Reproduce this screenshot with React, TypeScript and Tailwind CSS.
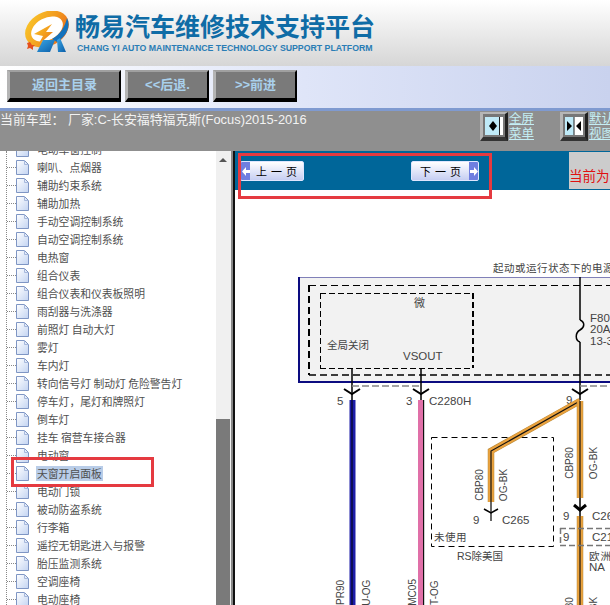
const cjk = "font-['Liberation_Sans','Noto_Sans_CJK_SC',sans-serif]";

const treeItems = [
  '电动车窗控制',
  '喇叭、点烟器',
  '辅助约束系统',
  '辅助加热',
  '手动空调控制系统',
  '自动空调控制系统',
  '电热窗',
  '组合仪表',
  '组合仪表和仪表板照明',
  '雨刮器与洗涤器',
  '前照灯 自动大灯',
  '雾灯',
  '车内灯',
  '转向信号灯 制动灯 危险警告灯',
  '停车灯，尾灯和牌照灯',
  '倒车灯',
  '挂车 宿营车接合器',
  '电动窗',
  '天窗开启面板',
  '电动门锁',
  '被动防盗系统',
  '行李箱',
  '遥控无钥匙进入与报警',
  '胎压监测系统',
  '空调座椅',
  '电动座椅',
];

const Logo = () => (
  <svg width="50" height="44" viewBox="0 0 50 44" className="shrink-0">
    <defs>
      <linearGradient id="ring" x1="0" y1="0" x2="1" y2="1">
        <stop offset="0" stopColor="#f9c62a" />
        <stop offset="0.55" stopColor="#f29a1e" />
        <stop offset="1" stopColor="#e8641c" />
      </linearGradient>
      <linearGradient id="blueR" x1="0" y1="0" x2="1" y2="1">
        <stop offset="0" stopColor="#3aa6e6" />
        <stop offset="1" stopColor="#0b5ea8" />
      </linearGradient>
    </defs>
    <ellipse cx="23" cy="18" rx="20" ry="14" transform="rotate(-28 23 18)" fill="#ffffff" stroke="url(#ring)" strokeWidth="6" />
    <path d="M43 7C47 15 43 25 33 31L28 28C37 23 41 15 43 7Z" fill="#1472bc" />
    <path d="M10 23L28 13L22 21L29 21L14 34L19 25Z" fill="url(#ring)" />
    <path d="M6 31L8 34L11 34L9 36L9 39L6 37L3 38L4 35L3 32Z" fill="#e4501c" />
    <path d="M19 29H31L26 41H13Z" fill="url(#blueR)" />
    <path d="M33 29L36 27L42 41H34Z" fill="url(#blueR)" />
  </svg>
);

const Header = () => (
  <div className="flex h-[66px] items-start bg-gradient-to-b from-white to-[#d6d6d6] pl-[24px] pt-[11px]">
    <Logo />
    <div className="ml-[1px] flex flex-col">
      <div className="text-[25px] font-bold leading-[28px] whitespace-nowrap text-[#0f6ca6] font-['Noto_Sans_CJK_SC',sans-serif]">
        畅易汽车维修技术支持平台
      </div>
      <div className="ml-[2px] mt-[3px] text-[8.75px] font-bold leading-[12px] whitespace-nowrap text-[#2a7db5] font-['Liberation_Sans',sans-serif]">
        CHANG YI AUTO MAINTENANCE TECHNOLOGY SUPPORT PLATFORM
      </div>
    </div>
  </div>
);

const NavButton = ({ label, width }: { label: string; width: string }) => (
  <button
    className={`${width} flex h-[32px] items-center justify-center border-t-[2px] border-l-[3px] border-r-[2px] border-b-[4px] border-t-[#a0a0a0] border-l-[#b4b4b4] border-r-black border-b-black bg-[#7a7a7a] text-[13px] font-bold text-[#a9d0ec] ${cjk}`}
  >
    {label}
  </button>
);

const Toolbar = () => (
  <div className="flex h-[45px] items-start gap-[4px] border-b-[3px] border-[#7f9ad0] bg-gradient-to-r from-white via-[#dfe5f8] to-[#c9d2ee] pl-[7px] pt-[4px]">
    <NavButton label="返回主目录" width="w-[114px]" />
    <NavButton label="<<后退." width="w-[84px]" />
    <NavButton label=">>前进" width="w-[84px]" />
  </div>
);

const ViewIcon = ({ full }: { full?: boolean }) => (
  <div className="flex h-[29px] w-[28px] shrink-0 items-center justify-center border-t-[2px] border-l-[3px] border-r-[3px] border-b-[4px] border-t-[#b5b5b5] border-l-[#b5b5b5] border-r-[#222222] border-b-[#333333] bg-[#777777]">
    <svg width="18" height="18" viewBox="0 0 18 18">
      <rect width="18" height="18" fill="#bfeaf8" />
      {full ? (
        <>
          <rect x="14" width="4" height="18" fill="#ffffff" />
          <rect x="14" width="1" height="18" fill="#222222" />
          <path d="M8 4L12 9L8 14L4 9Z" fill="#000" />
        </>
      ) : (
        <>
          <rect x="9" width="9" height="18" fill="#ffffff" />
          <rect x="8.5" width="1" height="18" fill="#222222" />
          <path d="M2 4L7 9L2 14ZM16 4L11 9L16 14Z" fill="#000" />
        </>
      )}
    </svg>
  </div>
);

const ViewLink = ({ text, full }: { text: string[]; full?: boolean }) => (
  <div className="flex items-start">
    <ViewIcon full={full} />
    <div className={`ml-[1px] text-[12.5px] leading-[15px] whitespace-nowrap text-[#c4eef4] underline ${cjk}`}>
      {text.map((t) => (
        <div key={t}>{t}</div>
      ))}
    </div>
  </div>
);

const CarBar = () => (
  <div className="flex h-[40px] bg-[#8f8f8f]">
    <div className={`w-[480px] shrink-0 text-[12.9px] leading-[17px] whitespace-nowrap text-[#f2f2f2] ${cjk}`}>
      当前车型： 厂家:C-长安福特福克斯(Focus)2015-2016
    </div>
    <div className="flex items-start gap-[26px] pt-[1px]">
      <ViewLink text={['全屏', '菜单']} full />
      <ViewLink text={['默认', '视图']} />
    </div>
  </div>
);

const DocIcon = () => (
  <svg width="13" height="15" viewBox="0 0 13 15" className="shrink-0">
    <defs>
      <linearGradient id="doc" x1="0" y1="0" x2="1" y2="1">
        <stop offset="0" stopColor="#ffffff" />
        <stop offset="1" stopColor="#c3d4f2" />
      </linearGradient>
    </defs>
    <path d="M0.5 0.5H8.5L12.5 4.5V14.5H0.5Z" fill="url(#doc)" stroke="#7f96c4" />
    <path d="M8.5 0.5V4.5H12.5" fill="none" stroke="#a6b8dc" />
  </svg>
);

const Sidebar = () => (
  <div className="flex w-[231px] shrink-0 overflow-hidden bg-white">
    <div className="relative h-[454px] w-[216px] overflow-hidden">
      <div className="absolute bottom-0 left-[6px] top-0 border-l border-dotted border-[#888888]" />
      <ul className="mt-[-11px]">
        {treeItems.map((item) => (
          <li key={item} className="flex h-[18px] items-center pl-[7px]">
            <span className="w-[9px] shrink-0 border-t border-dotted border-[#888888]" />
            <DocIcon />
            <span
              className={`ml-[7px] px-[1px] text-[10.8px] leading-[15px] whitespace-nowrap text-[#505050] font-['Noto_Sans_CJK_SC',sans-serif] ${
                item === '天窗开启面板' ? 'bg-[#b9cde8]' : ''
              }`}
            >
              {item}
            </span>
          </li>
        ))}
      </ul>
    </div>
    <div className="flex h-[454px] w-[15px] flex-col bg-[#f0f0f0]">
      <div className="h-[268px] pl-[3px] pt-[7px]">
        <div className="h-0 w-0 border-x-[4px] border-b-[4px] border-x-transparent border-b-[#555555]" />
      </div>
      <div className="mr-[1px] flex-1 bg-[#7a7a7a]" />
    </div>
  </div>
);

const PageButton = ({ label, dir }: { label: string; dir: 'prev' | 'next' }) => {
  const arrow = (
    <div className="flex w-[9px] items-center justify-center self-stretch bg-[#6f7fe0]">
      <svg width="8" height="9" viewBox="0 0 8 9">
        <path d={dir === 'next' ? 'M0 3H4V0L8 4.5 4 9V6H0Z' : 'M8 3H4V0L0 4.5 4 9V6H8Z'} fill="#fff" />
      </svg>
    </div>
  );
  return (
    <div className={`flex h-[20px] items-center overflow-hidden rounded-[2px] border border-[#dfe6ff] bg-gradient-to-b from-white to-[#c6cef2] ${dir === 'next' ? 'w-[68px]' : 'w-[65px]'}`}>
      {dir === 'prev' && arrow}
      <span className="flex-1 pl-[4px] text-center text-[11px] tracking-[4px] text-black font-['Noto_Sans_CJK_SC',sans-serif]">{label}</span>
      {dir === 'next' && arrow}
    </div>
  );
};

const PageBar = () => (
  <div className="flex h-[39px] items-start bg-[#006699] pl-[5px] pt-[10px]">
    <PageButton label="上一页" dir="prev" />
    <div className="ml-[107px]">
      <PageButton label="下一页" dir="next" />
    </div>
    <div className={`ml-[90px] mt-[-9px] h-[37px] w-[41px] shrink-0 overflow-hidden bg-[#cccccc] pt-[16px] text-[13.5px] leading-[18px] whitespace-nowrap text-[#e01010] ${cjk}`}>
      当前为
    </div>
  </div>
);

const Arrow = ({ x, y }: { x: number; y: number }) => (
  <path d={`M${x - 8} ${y - 5}L${x} ${y}L${x + 8} ${y - 5}`} fill="none" stroke="#000" strokeWidth="2" />
);

const label = { fontFamily: "'Liberation Sans','Noto Sans CJK SC',sans-serif", fill: '#444' };

const Rotated = ({ x, y, children }: { x: number; y: number; children: string }) => (
  <text x={x} y={y} transform={`rotate(-90 ${x} ${y})`} textAnchor="middle" fontSize="10" {...label}>
    {children}
  </text>
);

const OrangeWire = ({ d }: { d: string }) => (
  <>
    <path d={d} fill="none" stroke="#b98a3a" strokeWidth="6.5" />
    <path d={d} fill="none" stroke="#eaa23e" strokeWidth="5.5" />
    <path d={d} fill="none" stroke="#111" strokeWidth="1.2" />
  </>
);

const Diagram = () => (
  <svg width="375" height="415" viewBox="235 190 375 415" className="block">
    <text x="493" y="272" fontSize="10.5" letterSpacing="0.5" {...label}>起动或运行状态下的电源</text>

    <rect x="298" y="277" width="320" height="105" fill="#f2f2f2" />
    <path d="M298.5 277.5H610" stroke="#8080b8" fill="none" />
    <path d="M299 277V383M298 382H610" stroke="#0c0c80" strokeWidth="2" fill="none" />

    <path d="M309 285.5H610" stroke="#000" strokeDasharray="7 4" fill="none" strokeWidth="1" />
    <path d="M309 375H610" stroke="#000" strokeDasharray="7 4" fill="none" strokeWidth="1.5" />
    <path d="M309 285V375" stroke="#000" strokeDasharray="7 4" strokeWidth="2" fill="none" />
    <path d="M320 293.5H473M320 368.5H473" stroke="#000" strokeDasharray="6 3" fill="none" />
    <path d="M320.5 293V368" stroke="#000" strokeDasharray="6 3" fill="none" />
    <path d="M473 293V368" stroke="#000" strokeDasharray="6 3" strokeWidth="2" fill="none" />

    <text x="414" y="307" fontSize="11" {...label}>微</text>
    <text x="327" y="349" fontSize="10.5" {...label}>全局关闭</text>
    <text x="403" y="360" fontSize="11.5" {...label}>VSOUT</text>

    <path d="M580 277V320M580 342V400" stroke="#000" strokeWidth="1.5" fill="none" />
    <path d="M580 320C585 322 585 327 580 330C575 333 575 340 580 342" stroke="#000" strokeWidth="1.5" fill="none" />
    <text x="590" y="322" fontSize="11.5" {...label}>F80</text>
    <text x="590" y="333" fontSize="11.5" {...label}>20A</text>
    <text x="590" y="345" fontSize="11.5" {...label}>13-3</text>

    <path d="M352 368V400M421 368V400" stroke="#000" strokeWidth="1.5" fill="none" />
    <path d="M352 386H421M580 386H610" stroke="#888" strokeDasharray="7 3" strokeWidth="1.5" fill="none" />
    <Arrow x={352} y={394} />
    <Arrow x={421} y={394} />
    <Arrow x={580} y={394} />

    <text x="337" y="405" fontSize="11.5" {...label}>5</text>
    <text x="406" y="405" fontSize="11.5" {...label}>3</text>
    <text x="429" y="405" fontSize="11.5" {...label}>C2280H</text>
    <text x="566" y="404" fontSize="11.5" {...label}>9</text>

    <rect x="349.5" y="400" width="6" height="205" fill="#1c1ca8" />
    <rect x="351.5" y="400" width="1" height="205" fill="#000" />
    <rect x="418" y="400" width="6" height="205" fill="#e070a8" />
    <rect x="423" y="400" width="1.2" height="205" fill="#111" />

    <rect x="431.5" y="437.5" width="122" height="109" fill="none" stroke="#000" strokeDasharray="6 4" />
    <OrangeWire d="M580 401L491 451V502" />
    <OrangeWire d="M580 401V498" />
    <path d="M491 502V521" stroke="#000" strokeWidth="1.2" />
    <path d="M484 509L491 513L498 509" fill="none" stroke="#000" strokeWidth="1.5" />
    <path d="M580 498V516" stroke="#000" strokeWidth="1.5" />
    <path d="M574 505L580 510L586 505" fill="none" stroke="#000" strokeWidth="3" />
    <OrangeWire d="M580 516V605" />

    <Rotated x={483} y={485}>CBP80</Rotated>
    <Rotated x={507} y={485}>OG-BK</Rotated>
    <Rotated x={573} y={463}>CBP80</Rotated>
    <Rotated x={597} y={463}>OG-BK</Rotated>

    <text x="473" y="524" fontSize="11.5" {...label}>9</text>
    <text x="502" y="524" fontSize="11.5" {...label}>C265</text>
    <text x="434" y="541" fontSize="10.5" letterSpacing="0.5" {...label}>未使用</text>
    <text x="457" y="560" fontSize="10.5" {...label}>RS除美国</text>

    <text x="563" y="520" fontSize="11.5" {...label}>9</text>
    <text x="592" y="520" fontSize="11.5" {...label}>C26</text>
    <path d="M560 528.5H610M560 545.5H610M560.5 528V546" stroke="#777" strokeDasharray="6 3" strokeWidth="1.5" fill="none" />
    <text x="563" y="541" fontSize="11.5" {...label}>9</text>
    <text x="592" y="541" fontSize="11.5" {...label}>C21</text>
    <text x="589" y="560" fontSize="10.5" letterSpacing="1" {...label}>欧洲</text>
    <text x="589" y="571" fontSize="11.5" {...label}>NA</text>

    <Rotated x={344} y={596}>CPR90</Rotated>
    <Rotated x={370} y={596}>BU-OG</Rotated>
    <Rotated x={416} y={596}>CMC05</Rotated>
    <Rotated x={438} y={596}>VT-OG</Rotated>
    <Rotated x={573} y={613}>CBP80</Rotated>
    <Rotated x={597} y={613}>OG-BK</Rotated>
  </svg>
);

export default function App() {
  return (
    <div className="relative h-[605px] w-[610px] overflow-hidden bg-white">
      <Header />
      <Toolbar />
      <CarBar />
      <div className="flex">
        <Sidebar />
        <div className="flex h-[454px] w-[4px] shrink-0">
          <div className="w-[2px] bg-[#888888]" />
          <div className="w-[2px] bg-[#111111]" />
        </div>
        <div className="min-w-0 flex-1">
          <PageBar />
          <Diagram />
        </div>
      </div>

      <div className="absolute left-[238px] top-[153px] h-[46px] w-[254px] border-[3px] border-[#e53a40]" />
      <div className="absolute left-[11px] top-[457px] h-[30px] w-[143px] border-[3px] border-[#e53a40]" />
    </div>
  );
}
